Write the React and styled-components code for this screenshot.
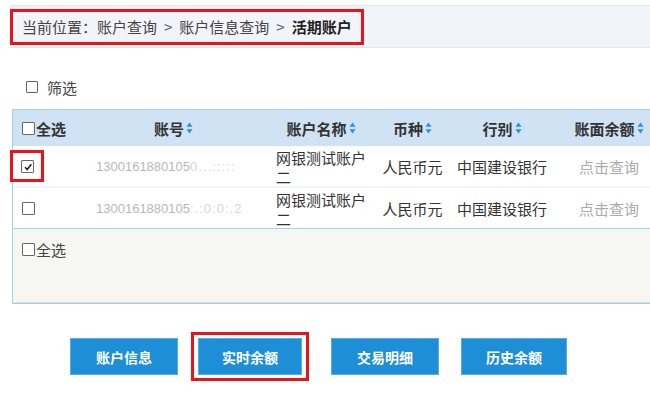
import React from "react";
import styled, { createGlobalStyle } from "styled-components";

const GlobalStyle = createGlobalStyle`
  html, body {
    margin: 0;
    padding: 0;
    background: #ffffff;
    overflow: hidden;
  }
  body {
    font-family: "Noto Sans CJK SC", "Noto Sans", sans-serif;
    color: #333;
  }
`;

const Page = styled.div`
  width: 650px;
  height: 394px;
  padding-left: 12px;
  box-sizing: border-box;
  overflow: hidden;
`;

const Breadcrumb = styled.div`
  margin: 5px 0 0 -2px;
  height: 41px;
  background: #f3f4f9;
  border-top: 1px solid #e3e5ee;
  border-bottom: 1px solid #e3e5ee;
  display: flex;
  align-items: center;
`;

const Mark = styled.div`
  border: 3px solid #e8141c;
  box-sizing: border-box;
  height: 36px;
  padding: 0 9px 0 9px;
  display: flex;
  align-items: center;
  font-size: 15px;
  color: #444;
  white-space: nowrap;
`;

const Sep = styled.span`
  margin: 0 7px;
  color: #666;
`;

const Current = styled.b`
  color: #222;
`;

const Box = styled.span`
  display: inline-block;
  width: ${p => p.size || 13}px;
  height: ${p => p.size || 13}px;
  border: 1px solid #666;
  border-radius: 1px;
  background: #fff;
  box-sizing: border-box;
  position: relative;
  flex: none;
`;

const Tick = styled.svg`
  position: absolute;
  left: 1px;
  top: 1px;
`;

const Check = ({ checked, size }) => (
  <Box size={size}>
    {checked && (
      <Tick width="10" height="10" viewBox="0 0 10 10">
        <path d="M2 5.2 L4.2 7.5 L8.3 2.3" fill="none" stroke="#222" strokeWidth="1.6" />
      </Tick>
    )}
  </Box>
);

const Filter = styled.div`
  margin: 29px 0 0 14px;
  height: 20px;
  display: flex;
  align-items: center;
  gap: 9px;
  font-size: 15px;
  color: #444;
`;

const Table = styled.div`
  margin-top: 12px;
  margin-right: -10px;
  border: 1px solid #a6cdee;
  border-right: none;
`;

const cols = "68px 185px 110px 73px 106px 108px";

const Head = styled.div`
  display: grid;
  grid-template-columns: ${cols};
  height: 36px;
  align-items: center;
  background: #cfe3f5;
  font-size: 15px;
  font-weight: bold;
  color: #333;
`;

const HeadCell = styled.div`
  display: flex;
  align-items: center;
  justify-content: ${p => (p.left ? "flex-start" : "center")};
  padding-left: ${p => (p.left ? "9px" : "0")};
  gap: ${p => (p.left ? "1px" : "2px")};
  white-space: nowrap;
`;

const Row = styled.div`
  display: grid;
  grid-template-columns: ${cols};
  height: 40px;
  align-items: center;
  background: #fff;
  border-top: ${p => (p.first ? "none" : "2px solid #f2f4f8")};
  font-size: 15px;
  color: #333;
`;

const Cell = styled.div`
  display: flex;
  align-items: center;
  justify-content: center;
  white-space: nowrap;
  color: ${p => p.color || "#333"};
`;

const CheckCell = styled.div`
  padding-left: ${p => (p.marked ? "0" : "9px")};
  margin-left: ${p => (p.marked ? "-3px" : "0")};
  display: flex;
  align-items: center;
`;

const RedFrame = styled.div`
  border: 3px solid #e8141c;
  width: 34px;
  height: 32px;
  box-sizing: border-box;
  display: flex;
  align-items: center;
  justify-content: center;
`;

const Account = styled.div`
  font-family: "Liberation Sans", Arial, sans-serif;
  font-size: 13px;
  color: #b8b8b8;
  padding-left: 15px;
  white-space: nowrap;
`;

const Masked = styled.span`
  color: #d6d6d6;
  letter-spacing: 1px;
`;

const NameCell = styled.div`
  width: 96px;
  padding-left: 10px;
  align-self: start;
  margin-top: 2px;
  line-height: 19px;
  white-space: normal;
  word-break: break-all;
`;

const Footer = styled.div`
  height: 75px;
  background: #f6f7f3;
  border-top: 1px solid #a6cdee;
  border-bottom: 1px solid #dcdcdc;
  padding: 10px 0 0 9px;
  box-sizing: border-box;
`;

const FooterLine = styled.div`
  display: flex;
  align-items: center;
  gap: 1px;
  height: 20px;
  font-size: 15px;
  color: #444;
`;

const Actions = styled.div`
  margin-top: 28px;
  display: flex;
  align-items: center;
  padding-left: 58px;
  gap: 22px;
`;

const Button = styled.button`
  width: ${p => p.w || 108}px;
  height: 37px;
  background: #1e8fd6;
  border: 1px solid #56aee6;
  color: #fff;
  font-family: "Noto Sans CJK SC", sans-serif;
  font-size: 14px;
  font-weight: bold;
  padding: 0;
`;

const Highlight = styled.div`
  border: 3px solid #e8141c;
  padding: 3px 4px;
  margin-left: -9px;
  display: flex;
`;

const SortIcon = () => (
  <svg width="7" height="12" viewBox="0 0 7 12">
    <path d="M3.5 0.5 L6.5 4.8 L0.5 4.8 Z" fill="#2d8fdc" />
    <path d="M3.5 11.5 L6.5 7.2 L0.5 7.2 Z" fill="#2d8fdc" />
  </svg>
);

const rows = [
  { id: 1, acc: "1300161880105", mask: "0...:::::", checked: true },
  { id: 2, acc: "1300161880105", mask: ":.:0:0:.2", checked: false },
];

const App = () => (
  <Page>
    <GlobalStyle />
    <Breadcrumb>
      <Mark>
        当前位置：账户查询<Sep>&gt;</Sep>账户信息查询<Sep>&gt;</Sep>
        <Current>活期账户</Current>
      </Mark>
    </Breadcrumb>

    <Filter>
      <Check size={12} />
      筛选
    </Filter>

    <Table>
      <Head>
        <HeadCell left>
          <Check />
          全选
        </HeadCell>
        <HeadCell>账号<SortIcon /></HeadCell>
        <HeadCell>账户名称<SortIcon /></HeadCell>
        <HeadCell>币种<SortIcon /></HeadCell>
        <HeadCell>行别<SortIcon /></HeadCell>
        <HeadCell>账面余额<SortIcon /></HeadCell>
      </Head>
      {rows.map((r, i) => (
        <Row key={r.id} first={i === 0}>
          <CheckCell marked={r.checked}>
            {r.checked ? (
              <RedFrame>
                <Check checked />
              </RedFrame>
            ) : (
              <Check />
            )}
          </CheckCell>
          <Account>
            {r.acc}
            <Masked>{r.mask}</Masked>
          </Account>
          <NameCell>网银测试账户二</NameCell>
          <Cell>人民币元</Cell>
          <Cell>中国建设银行</Cell>
          <Cell color="#aaa">点击查询</Cell>
        </Row>
      ))}
      <Footer>
        <FooterLine>
          <Check />
          全选
        </FooterLine>
      </Footer>
    </Table>

    <Actions>
      <Button w={108}>账户信息</Button>
      <Highlight>
        <Button w={104}>实时余额</Button>
      </Highlight>
      <Button w={108}>交易明细</Button>
      <Button w={106}>历史余额</Button>
    </Actions>
  </Page>
);

export default App;
